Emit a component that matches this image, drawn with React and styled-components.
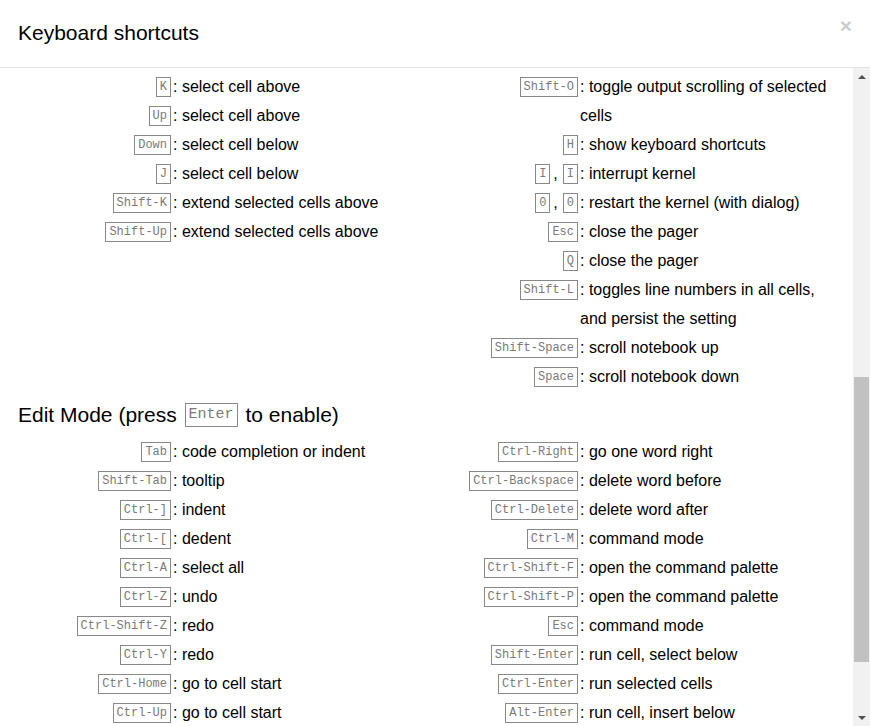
import styled, { createGlobalStyle } from "styled-components";

const GlobalStyle = createGlobalStyle`
  html, body {
    margin: 0;
    padding: 0;
    background: #fff;
  }
  body {
    font-family: "Liberation Sans", Arial, sans-serif;
    color: #000;
  }
`;

const Modal = styled.div`
  width: 870px;
  height: 726px;
  background: #fff;
  display: flex;
  flex-direction: column;
  overflow: hidden;
`;

const Header = styled.div`
  height: 67px;
  flex: none;
  display: flex;
  align-items: center;
  justify-content: space-between;
  padding: 0 18px;
  border-bottom: 1px solid #e5e5e5;
`;

const Title = styled.h4`
  margin: 0;
  font-size: 21px;
  font-weight: normal;
  line-height: 26px;
  position: relative;
  top: -1px;
`;

const Close = styled.button`
  align-self: flex-start;
  margin-top: 15px;
  margin-right: 0;
  padding: 0;
  border: 0;
  background: none;
  font-family: "Liberation Sans", Arial, sans-serif;
  font-size: 21px;
  font-weight: bold;
  line-height: 1;
  color: #000;
  opacity: 0.2;
`;

const Body = styled.div`
  flex: 1;
  display: flex;
  min-height: 0;
`;

const Content = styled.div`
  flex: 1;
  padding: 4px 18px 0;
  overflow: hidden;
`;

const Columns = styled.div`
  display: grid;
  grid-template-columns: 407px 1fr;
`;

const Column = styled.div`
  display: flex;
  flex-direction: column;
`;

const Row = styled.div`
  display: flex;
  line-height: 29px;
  font-size: 16px;
`;

const KeyCell = styled.div`
  width: 155px;
  flex: none;
  text-align: right;
  white-space: nowrap;
`;

const Sep = styled.span`
  margin: 0 3px 0 1px;
`;

const Descr = styled.div`
  flex: 1;
  &::before {
    content: ": ";
  }
`;

const Kbd = styled.kbd`
  display: inline-block;
  vertical-align: middle;
  margin: 0 2px;
  padding: 1px 3px;
  border: 1px solid #888;
  font-family: "Liberation Mono", "Courier New", monospace;
  font-size: ${(p) => (p.$big ? "15px" : "12px")};
  line-height: ${(p) => (p.$big ? "20px" : "16px")};
  color: #7a7a7a;
  position: relative;
  top: -1px;
`;

const Section = styled.h4`
  margin: 11px 0 9px;
  font-size: 21px;
  font-weight: normal;
  line-height: 26px;
`;

const Scrollbar = styled.div`
  width: 17px;
  flex: none;
  background: #f1f1f1;
  display: flex;
  flex-direction: column;
`;

const ArrowButton = styled.div`
  height: 17px;
  flex: none;
  display: flex;
  align-items: center;
  justify-content: center;
  &::after {
    content: "";
    width: 0;
    height: 0;
    border-left: 4px solid transparent;
    border-right: 4px solid transparent;
    ${(p) =>
      p.$down
        ? "border-top: 4px solid #505050;"
        : "border-bottom: 4px solid #505050;"}
  }
`;

const Track = styled.div`
  flex: 1;
  padding-top: 292px;
`;

const Thumb = styled.div`
  height: 285px;
  margin: 0 1px;
  background: #c1c1c1;
`;

const commandLeft = [
  [["K"], "select cell above"],
  [["Up"], "select cell above"],
  [["Down"], "select cell below"],
  [["J"], "select cell below"],
  [["Shift-K"], "extend selected cells above"],
  [["Shift-Up"], "extend selected cells above"],
];

const commandRight = [
  [["Shift-O"], "toggle output scrolling of selected cells"],
  [["H"], "show keyboard shortcuts"],
  [["I", "I"], "interrupt kernel"],
  [["0", "0"], "restart the kernel (with dialog)"],
  [["Esc"], "close the pager"],
  [["Q"], "close the pager"],
  [["Shift-L"], "toggles line numbers in all cells, and persist the setting"],
  [["Shift-Space"], "scroll notebook up"],
  [["Space"], "scroll notebook down"],
];

const editLeft = [
  [["Tab"], "code completion or indent"],
  [["Shift-Tab"], "tooltip"],
  [["Ctrl-]"], "indent"],
  [["Ctrl-["], "dedent"],
  [["Ctrl-A"], "select all"],
  [["Ctrl-Z"], "undo"],
  [["Ctrl-Shift-Z"], "redo"],
  [["Ctrl-Y"], "redo"],
  [["Ctrl-Home"], "go to cell start"],
  [["Ctrl-Up"], "go to cell start"],
  [["Ctrl-End"], "go to cell end"],
  [["Ctrl-Down"], "go to cell end"],
];

const editRight = [
  [["Ctrl-Right"], "go one word right"],
  [["Ctrl-Backspace"], "delete word before"],
  [["Ctrl-Delete"], "delete word after"],
  [["Ctrl-M"], "command mode"],
  [["Ctrl-Shift-F"], "open the command palette"],
  [["Ctrl-Shift-P"], "open the command palette"],
  [["Esc"], "command mode"],
  [["Shift-Enter"], "run cell, select below"],
  [["Ctrl-Enter"], "run selected cells"],
  [["Alt-Enter"], "run cell, insert below"],
  [["Ctrl-Shift-Minus"], "split cell at cursor"],
  [["Ctrl-S"], "Save and Checkpoint"],
];

function Shortcut({ keys, text }) {
  return (
    <Row>
      <KeyCell>
        {keys.map((k, i) => (
          <span key={i}>
            {i > 0 && <Sep>,</Sep>}
            <Kbd>{k}</Kbd>
          </span>
        ))}
      </KeyCell>
      <Descr>{text}</Descr>
    </Row>
  );
}

function ShortcutColumns({ left, right }) {
  return (
    <Columns>
      <Column>
        {left.map(([keys, text], i) => (
          <Shortcut key={i} keys={keys} text={text} />
        ))}
      </Column>
      <Column>
        {right.map(([keys, text], i) => (
          <Shortcut key={i} keys={keys} text={text} />
        ))}
      </Column>
    </Columns>
  );
}

export default function App() {
  return (
    <>
      <GlobalStyle />
      <Modal>
        <Header>
          <Title>Keyboard shortcuts</Title>
          <Close aria-label="Close">×</Close>
        </Header>
        <Body>
          <Content>
            <ShortcutColumns left={commandLeft} right={commandRight} />
            <Section>
              Edit Mode (press <Kbd $big>Enter</Kbd> to enable)
            </Section>
            <ShortcutColumns left={editLeft} right={editRight} />
          </Content>
          <Scrollbar>
            <ArrowButton />
            <Track>
              <Thumb />
            </Track>
            <ArrowButton $down />
          </Scrollbar>
        </Body>
      </Modal>
    </>
  );
}
